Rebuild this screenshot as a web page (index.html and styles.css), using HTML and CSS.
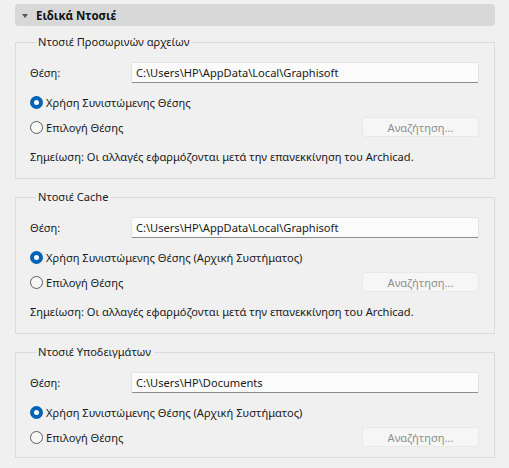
FILE: index.html
```html
<!DOCTYPE html>
<html lang="el">
<head>
    <meta charset="UTF-8">
    <meta name="viewport" content="width=device-width, initial-scale=1.0">
    <title>Ειδικά Ντοσιέ</title>
    <link rel="stylesheet" href="styles.css">
</head>
<body>
    <div class="panel">
        <div class="panel-header">
            <span class="caret"></span>
            <span class="panel-title">Ειδικά Ντοσιέ</span>
        </div>

        <fieldset class="group">
            <legend>Ντοσιέ Προσωρινών αρχείων</legend>
            <div class="path-row">
                <span class="path-label">Θέση:</span>
                <div class="path-field">C:\Users\HP\AppData\Local\Graphisoft</div>
            </div>
            <label class="radio-row">
                <input type="radio" name="temp" checked>
                <span class="radio"></span>
                <span>Χρήση Συνιστώμενης Θέσης</span>
            </label>
            <div class="choose-row">
                <label class="radio-row">
                    <input type="radio" name="temp">
                    <span class="radio"></span>
                    <span>Επιλογή Θέσης</span>
                </label>
                <button class="browse" disabled>Αναζήτηση...</button>
            </div>
            <p class="note">Σημείωση: Οι αλλαγές εφαρμόζονται μετά την επανεκκίνηση του Archicad.</p>
        </fieldset>

        <fieldset class="group">
            <legend>Ντοσιέ Cache</legend>
            <div class="path-row">
                <span class="path-label">Θέση:</span>
                <div class="path-field">C:\Users\HP\AppData\Local\Graphisoft</div>
            </div>
            <label class="radio-row">
                <input type="radio" name="cache" checked>
                <span class="radio"></span>
                <span>Χρήση Συνιστώμενης Θέσης (Αρχική Συστήματος)</span>
            </label>
            <div class="choose-row">
                <label class="radio-row">
                    <input type="radio" name="cache">
                    <span class="radio"></span>
                    <span>Επιλογή Θέσης</span>
                </label>
                <button class="browse" disabled>Αναζήτηση...</button>
            </div>
            <p class="note">Σημείωση: Οι αλλαγές εφαρμόζονται μετά την επανεκκίνηση του Archicad.</p>
        </fieldset>

        <fieldset class="group group-last">
            <legend>Ντοσιέ Υποδειγμάτων</legend>
            <div class="path-row">
                <span class="path-label">Θέση:</span>
                <div class="path-field">C:\Users\HP\Documents</div>
            </div>
            <label class="radio-row">
                <input type="radio" name="templates" checked>
                <span class="radio"></span>
                <span>Χρήση Συνιστώμενης Θέσης (Αρχική Συστήματος)</span>
            </label>
            <div class="choose-row">
                <label class="radio-row">
                    <input type="radio" name="templates">
                    <span class="radio"></span>
                    <span>Επιλογή Θέσης</span>
                </label>
                <button class="browse" disabled>Αναζήτηση...</button>
            </div>
        </fieldset>
    </div>
</body>
</html>
```

FILE: styles.css
```css
body {
    margin: 0;
    font-family: "Noto Sans", "Open Sans", sans-serif;
    font-size: 11.1px;
    background: #f0f0f0;
    color: #1a1a1a;
}

.panel {
    width: 480px;
    padding: 4px 0 0 15px;
}

.panel-header {
    display: flex;
    align-items: center;
    height: 22px;
    background: #d8d8d8;
    border-radius: 4px;
}

.caret {
    width: 0;
    height: 0;
    margin: 1px 8px 0 7px;
    border-left: 3.5px solid transparent;
    border-right: 3.5px solid transparent;
    border-top: 4px solid #555;
}

.panel-title {
    font-size: 11.5px;
    font-weight: bold;
    color: #111;
}

/* Group boxes */
.group {
    margin: 8px 0 0;
    padding: 12px 15px 13px 14px;
    border: 1px solid #dcdcdc;
    display: flex;
    flex-direction: column;
}

.group + .group {
    margin-top: 10px;
}

.group legend {
    padding: 0 3px 0 2px;
    margin-left: 6px;
    line-height: 16px;
}

.path-row {
    display: flex;
    align-items: center;
    height: 21px;
}

.path-label {
    width: 101px;
}

.path-field {
    flex: 1;
    height: 21px;
    box-sizing: border-box;
    padding: 0 4px;
    line-height: 20px;
    background: #fbfbfb;
    border: 1px solid #e4e4e4;
    border-bottom-color: #8c8c8c;
    border-radius: 2px;
    white-space: nowrap;
}

.radio-row {
    display: flex;
    align-items: center;
    height: 20px;
}

.path-row + .radio-row {
    margin-top: 9px;
}

.radio-row input {
    display: none;
}

.radio {
    width: 13px;
    height: 13px;
    box-sizing: border-box;
    border: 1px solid #5c5c5c;
    border-radius: 50%;
    margin-right: 3px;
    background: #f7f7f7;
}

.radio-row input:checked + .radio {
    border: 4px solid #0063b8;
    background: #fff;
}

.choose-row {
    display: flex;
    align-items: center;
    justify-content: space-between;
    margin-top: 5px;
    height: 20px;
}

.browse {
    width: 117px;
    height: 20px;
    font-family: inherit;
    font-size: inherit;
    color: #8f8f8f;
    background: #f6f6f6;
    border: 1px solid #e8e8e8;
    border-radius: 3px;
    padding: 0;
}

.note {
    margin: 12px 0 0;
    line-height: 16px;
    white-space: nowrap;
}

.group-last {
    padding-bottom: 10px;
}
```
